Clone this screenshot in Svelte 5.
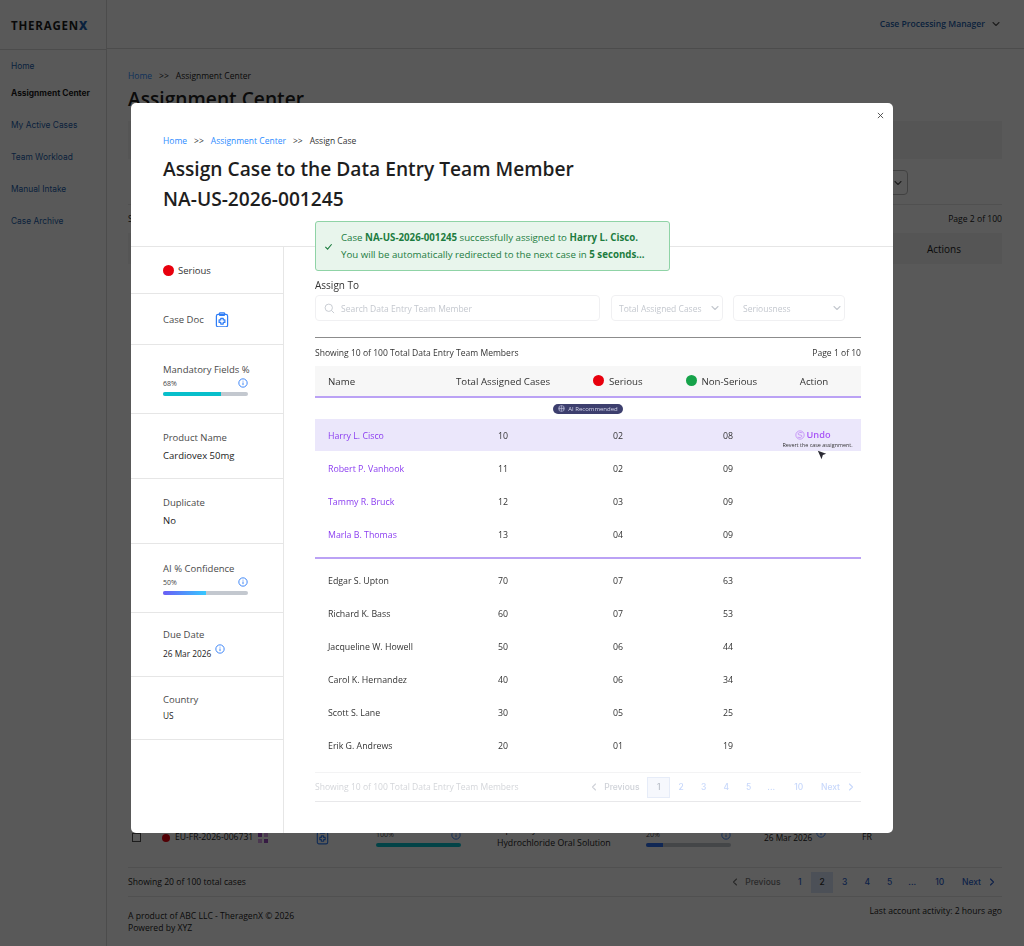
<script>
  const nav = ["Home", "Assignment Center", "My Active Cases", "Team Workload", "Manual Intake", "Case Archive"];

  const recommended = [
    { name: "Harry L. Cisco", total: 10, serious: "02", non: "08", picked: true },
    { name: "Robert P. Vanhook", total: 11, serious: "02", non: "09" },
    { name: "Tammy R. Bruck", total: 12, serious: "03", non: "09" },
    { name: "Marla B. Thomas", total: 13, serious: "04", non: "09" }
  ];

  const others = [
    { name: "Edgar S. Upton", total: 70, serious: "07", non: "63" },
    { name: "Richard K. Bass", total: 60, serious: "07", non: "53" },
    { name: "Jacqueline W. Howell", total: 50, serious: "06", non: "44" },
    { name: "Carol K. Hernandez", total: 40, serious: "06", non: "34" },
    { name: "Scott S. Lane", total: 30, serious: "05", non: "25" },
    { name: "Erik G. Andrews", total: 20, serious: "01", non: "19" }
  ];
</script>

{#snippet info(cls = "")}
  <svg class="info {cls}" viewBox="0 0 12 12" width="10" height="10" fill="none" stroke="#2f7df6" stroke-width="1.1">
    <circle cx="6" cy="6" r="5" />
    <path d="M6 5.4v3.1M6 3.3v.9" />
  </svg>
{/snippet}

{#snippet caseDoc(size, color)}
  <svg viewBox="0 0 16 18" width={size} height={size * 1.125} fill="none" stroke={color} stroke-width="1.4" stroke-linejoin="round">
    <rect x="1.6" y="2.6" width="12.8" height="14.4" rx="2" />
    <rect x="5" y="1" width="6" height="3" rx="1" />
    <path d="M6.6 7.2h2.8v1.9h1.9v2.8H9.4v1.9H6.6v-1.9H4.7V9.1h1.9z" />
  </svg>
{/snippet}

{#snippet chevron(d = "M3 4.5 6 7.5 9 4.5")}
  <svg viewBox="0 0 12 12" width="12" height="12" fill="none" stroke="currentColor" stroke-width="1.1" stroke-linecap="round" stroke-linejoin="round">
    <path {d} />
  </svg>
{/snippet}

{#snippet row(r)}
  <div class="grid row" class:picked={r.picked}>
    <span class="who" class:ai={recommended.includes(r)}>{r.name}</span>
    <span class="mid">{r.total}</span>
    <span class="mid">{r.serious}</span>
    <span class="mid">{r.non}</span>
    {#if r.picked}
      <div class="undo">
        <span class="undo-link">
          <svg viewBox="0 0 12 12" width="10" height="10" fill="none" stroke="#c08cf5" stroke-width="1">
            <circle cx="6" cy="6" r="5" />
            <path d="M8.8 3.6C7 2.4 3.6 3 3.6 4.8c0 2 4.8.4 4.8 2.4 0 1.8-3.4 2.3-5.2 1.2" />
          </svg>
          Undo
        </span>
        <span class="revert">Revert the case assignment.</span>
      </div>
    {/if}
  </div>
{/snippet}

<div class="shell">
  <aside class="side">
    <div class="logo">THERAGEN<b>X</b></div>
    <nav>
      {#each nav as item, i}
        <a class:on={i === 1} href="#/">{item}</a>
      {/each}
    </nav>
  </aside>

  <div class="page">
    <header class="top">
      <span class="role">Case Processing Manager</span>
      <span class="role-chev">{@render chevron()}</span>
    </header>

    <main class="main">
      <div class="crumbs"><a href="#/">Home</a><i>&gt;&gt;</i><span>Assignment Center</span></div>
      <h1>Assignment Center</h1>
      <div class="strip"></div>
      <div class="filters"><span class="select">{@render chevron()}</span></div>
      <div class="count"><span>Showing 20 of 100 total cases</span><span>Page 2 of 100</span></div>
      <div class="thead"><span>Actions</span></div>
      <div class="spacer"></div>
      <div class="lastrow">
        <span class="check"></span>
        <span class="rdot"></span>
        <span class="case-id">EU-FR-2026-006731</span>
        <svg class="apps" viewBox="0 0 10 10" width="10" height="10"><rect width="4" height="4" x="0" y="0" fill="#9b4fc0" /><rect width="4" height="4" x="6" y="0" fill="#d7a0e6" /><rect width="4" height="4" x="0" y="6" fill="#d7a0e6" /><rect width="4" height="4" x="6" y="6" fill="#9b4fc0" /></svg>
        <span class="doc">{@render caseDoc(13, "#2f7df6")}</span>
        <div class="meter m1">
          <div class="meter-top"><small>100%</small>{@render info()}</div>
          <div class="bar"><div class="fill teal" style="width:100%"></div></div>
        </div>
        <div class="drug">Diphenhydramine<br />Hydrochloride Oral Solution</div>
        <div class="meter m2">
          <div class="meter-top"><small>20%</small>{@render info()}</div>
          <div class="bar"><div class="fill blue" style="width:20%"></div></div>
        </div>
        <span class="date">26 Mar 2026 {@render info("up")}</span>
        <span class="fr">FR</span>
      </div>
      <div class="bottom">
        <span>Showing 20 of 100 total cases</span>
        <div class="pager">
          <span class="prev">{@render chevron("M7.5 3 4.5 6 7.5 9")} Previous</span>
          <span class="pg">1</span><span class="pg cur">2</span><span class="pg">3</span><span class="pg">4</span><span class="pg">5</span><span class="pg">...</span><span class="pg wide">10</span>
          <span class="next">Next {@render chevron("M4.5 3 7.5 6 4.5 9")}</span>
        </div>
      </div>
      <footer class="foot">
        <span>A product of ABC LLC - TheragenX © 2026<br />Powered by XYZ</span>
        <span>Last account activity: 2 hours ago</span>
      </footer>
    </main>
  </div>

  <div class="overlay">
    <section class="modal">
      <button class="close" aria-label="Close">
        <svg viewBox="0 0 8 8" width="7" height="7" stroke="#444" stroke-width="1"><path d="M1 1l6 6M7 1l-6 6" /></svg>
      </button>

      <div class="m-head">
        <div class="crumbs m"><a href="#/">Home</a><i>&gt;&gt;</i><a href="#/">Assignment Center</a><i>&gt;&gt;</i><span>Assign Case</span></div>
        <h2>Assign Case to the Data Entry Team Member<br />NA-US-2026-001245</h2>
      </div>

      <div class="toast">
        <svg viewBox="0 0 10 10" width="9" height="9" fill="none" stroke="#1c7c3f" stroke-width="1.2"><path d="M1.5 5.5 4 8 8.5 2.5" /></svg>
        <p>Case <b>NA-US-2026-001245</b> successfully assigned to <b>Harry L. Cisco.</b><br />You will be automatically redirected to the next case in <b>5 seconds...</b></p>
      </div>

      <div class="m-body">
        <div class="facts">
          <div class="fact serious inline"><span class="dot red big"></span><span class="val-l">Serious</span></div>
          <div class="fact docs inline"><span class="lab">Case Doc</span>{@render caseDoc(14, "#2f7df6")}</div>
          <div class="fact tall">
            <span class="lab">Mandatory Fields %</span>
            <div class="meter-top"><small>68%</small>{@render info()}</div>
            <div class="bar"><div class="fill cyan" style="width:68%"></div></div>
          </div>
          <div class="fact mid-cell"><span class="lab">Product Name</span><span class="val">Cardiovex 50mg</span></div>
          <div class="fact mid-cell"><span class="lab">Duplicate</span><span class="val">No</span></div>
          <div class="fact tall">
            <span class="lab">AI % Confidence</span>
            <div class="meter-top"><small>50%</small>{@render info()}</div>
            <div class="bar"><div class="fill grad" style="width:50%"></div></div>
          </div>
          <div class="fact due"><span class="lab">Due Date</span><span class="val sm">26 Mar 2026 {@render info("up")}</span></div>
          <div class="fact country"><span class="lab">Country</span><span class="val sm">US</span></div>
        </div>

        <div class="assign">
          <label class="assign-label" for="member">Assign To</label>
          <div class="tools">
            <div class="search">
              <svg viewBox="0 0 12 12" width="11" height="11" fill="none" stroke="#c4c8cf" stroke-width="1"><circle cx="5.2" cy="5.2" r="4" /><path d="M8.2 8.2 11 11" /></svg>
              <input id="member" placeholder="Search Data Entry Team Member" disabled />
            </div>
            <div class="pick p1">Total Assigned Cases {@render chevron()}</div>
            <div class="pick p2">Seriousness {@render chevron()}</div>
          </div>

          <div class="sum"><span>Showing 10 of 100 Total Data Entry Team Members</span><span>Page 1 of 10</span></div>

          <div class="grid hd">
            <span class="hname">Name</span>
            <span class="mid">Total Assigned Cases</span>
            <span class="mid"><i class="dot red"></i> Serious</span>
            <span class="mid non"><i class="dot green"></i> Non-Serious</span>
            <span class="act">Action</span>
          </div>

          <div class="ai-wrap">
            <span class="ai-pill">
              <svg viewBox="0 0 10 10" width="7" height="7" fill="none" stroke="#c9cbe6" stroke-width=".8"><circle cx="5" cy="5" r="4.2" /><path d="M1 5h8M5 1v8M2.5 2.5v5M7.5 2.5v5" /></svg>
              AI Recommended
            </span>
          </div>

          <div class="group">
            {#each recommended as r}
              {@render row(r)}
            {/each}
          </div>

          <div class="group rest">
            {#each others as r}
              {@render row(r)}
            {/each}
          </div>

          <div class="m-pager">
            <span>Showing 10 of 100 Total Data Entry Team Members</span>
            <div class="pager light">
              <span class="prev">{@render chevron("M7.5 3 4.5 6 7.5 9")} Previous</span>
              <span class="pg cur">1</span><span class="pg">2</span><span class="pg">3</span><span class="pg">4</span><span class="pg">5</span><span class="pg">...</span><span class="pg wide">10</span>
              <span class="next">Next {@render chevron("M4.5 3 7.5 6 4.5 9")}</span>
            </div>
          </div>

          <svg class="cursor" viewBox="0 0 12 12" width="10" height="10"><path d="M1 1l10 3.5-4 1.5-1.5 5z" fill="#2a2a33" /></svg>
        </div>
      </div>
    </section>
  </div>
</div>

<style>
  :global(body) {
    margin: 0;
    background: #fff;
  }

  .shell {
    display: flex;
    height: 946px;
    overflow: hidden;
    font-family: "Open Sans", sans-serif;
    color: #222;
  }

  /* page behind the dialog */
  .side {
    width: 106px;
    flex: none;
    border-right: 1px solid #d9d9d9;
    font-family: Inter, sans-serif;
  }

  .logo {
    height: 48px;
    display: flex;
    align-items: center;
    padding-left: 11px;
    border-bottom: 1px solid #d9d9d9;
    font: 700 11.5px "Open Sans", sans-serif;
    letter-spacing: 0.8px;
    color: #1c1c1c;
    margin-top: 1px;
  }

  .logo b {
    color: #1d5fae;
  }

  nav {
    display: flex;
    flex-direction: column;
    padding: 0 0 0 11px;
  }

  nav a {
    font-size: 8.4px;
    line-height: 12px;
    color: #1d5fae;
    text-decoration: none;
    margin-top: 20px;
  }

  nav a:first-child {
    margin-top: 10px;
  }

  nav a.on {
    font-weight: 700;
    color: #1c1c1c;
    margin-top: 15px;
  }

  .page {
    flex: 1;
    min-width: 0;
    display: flex;
    flex-direction: column;
  }

  .top {
    height: 49px;
    flex: none;
    box-sizing: border-box;
    border-bottom: 1px solid #d9d9d9;
    display: flex;
    align-items: center;
    justify-content: flex-end;
    padding-right: 22px;
    gap: 5px;
  }

  .role {
    font-size: 8.6px;
    font-weight: 600;
    color: #1d5fae;
  }

  .role-chev {
    display: flex;
    color: #555;
  }

  .main {
    flex: 1;
    display: flex;
    flex-direction: column;
    padding: 21px 22px 12px 21px;
    min-height: 0;
  }

  .crumbs {
    font-size: 8.5px;
    line-height: 12px;
    display: flex;
    gap: 7px;
  }

  .crumbs a {
    color: #2d8cff;
    text-decoration: none;
  }

  .crumbs i {
    font-style: normal;
  }

  h1 {
    margin: 5px 0 0;
    font-size: 19.2px;
    line-height: 24px;
    font-weight: 600;
  }

  .strip {
    height: 38px;
    margin-top: 10px;
    background: #f3f3f3;
  }

  .filters {
    display: flex;
    justify-content: flex-end;
    padding: 11px 94px 9px 0;
    border-bottom: 1px solid #e6e6e6;
  }

  .select {
    width: 60px;
    height: 25px;
    box-sizing: border-box;
    border: 1px solid #bbb;
    border-radius: 4px;
    display: flex;
    align-items: center;
    justify-content: flex-end;
    padding-right: 3px;
    color: #555;
  }

  .count {
    display: flex;
    justify-content: space-between;
    font-size: 8.6px;
    line-height: 12px;
    padding: 8px 0 8px;
  }

  .thead {
    height: 31px;
    background: #f3f3f3;
    display: flex;
    align-items: center;
    justify-content: flex-end;
    padding-right: 41px;
    font-size: 10px;
  }

  .spacer {
    flex: 1;
  }

  .lastrow {
    height: 38px;
    flex: none;
    display: flex;
    align-items: flex-start;
    font-size: 8.75px;
    border-bottom: 1px solid #e6e6e6;
  }

  .check {
    width: 9px;
    height: 9px;
    box-sizing: border-box;
    border: 1px solid #555;
    margin: 4px 0 0 4px;
    flex: none;
  }

  .rdot {
    width: 8px;
    height: 8px;
    border-radius: 50%;
    background: #e8000d;
    margin: 5px 0 0 21px;
    flex: none;
  }

  .case-id {
    margin: 2px 0 0 5px;
    line-height: 13px;
    font-size: 8.6px;
    flex: none;
    width: 78px;
    white-space: nowrap;
  }

  .apps {
    margin: 4px 0 0 5px;
    flex: none;
  }

  .doc {
    margin: 1px 0 0 48px;
    flex: none;
  }

  .meter {
    margin-top: -2px;
  }

  .meter.m1 {
    width: 85px;
    margin-left: 47px;
    flex: none;
  }

  .drug {
    width: 149px;
    flex: none;
    margin: -5px 0 0 36px;
    line-height: 13px;
  }

  .meter.m2 {
    width: 85px;
    flex: none;
  }

  .date {
    margin: -1px 0 0 33px;
    width: 98px;
    flex: none;
    line-height: 13px;
    font-size: 8.3px;
    white-space: nowrap;
  }

  .fr {
    margin-top: 2px;
    line-height: 13px;
  }

  .bottom {
    height: 29px;
    flex: none;
    box-sizing: border-box;
    border-bottom: 1px solid #e6e6e6;
    display: flex;
    align-items: center;
    justify-content: space-between;
    font-size: 8.6px;
  }

  .pager {
    display: flex;
    align-items: center;
    font-family: Inter, sans-serif;
    font-size: 8.5px;
    font-weight: 500;
    color: #2a5fd0;
    padding-right: 4px;
  }

  .prev, .next {
    display: flex;
    align-items: center;
    gap: 4px;
  }

  .prev {
    color: #777;
    margin-right: 8px;
  }

  .next {
    margin-left: 6px;
    gap: 5px;
  }

  .pg {
    width: 22.5px;
    height: 21px;
    display: flex;
    align-items: center;
    justify-content: center;
  }

  .pg.wide {
    width: 32.5px;
  }

  .pg.cur {
    background: #dbe6fa;
    color: #333;
  }

  .foot {
    display: flex;
    justify-content: space-between;
    align-items: flex-start;
    padding-top: 8px;
    font-size: 8.6px;
    line-height: 12px;
  }

  .foot span:first-child {
    padding-top: 5px;
  }

  .overlay {
    position: fixed;
    inset: 0;
    background: rgba(0, 0, 0, 0.65);
    display: flex;
    justify-content: center;
    align-items: flex-start;
    padding-top: 103px;
  }

  /* dialog */
  .modal {
    position: relative;
    width: 762px;
    height: 730px;
    background: #fff;
    border-radius: 5px;
    display: flex;
    flex-direction: column;
  }

  .close {
    position: absolute;
    top: 9px;
    right: 9px;
    border: 0;
    background: none;
    padding: 0;
    display: flex;
  }

  .m-head {
    height: 144px;
    box-sizing: border-box;
    padding: 32px 32px 0;
    border-bottom: 1px solid #e6e6e6;
    flex: none;
  }

  .crumbs.m {
    color: #333;
  }

  h2 {
    margin: 7px 0 0;
    font-size: 19.2px;
    line-height: 30px;
    font-weight: 600;
    color: #1e1e1e;
  }

  .toast {
    position: absolute;
    left: 184px;
    top: 118px;
    width: 355px;
    height: 50px;
    box-sizing: border-box;
    background: #e8f5ec;
    border: 1px solid #8fd3a6;
    border-radius: 3px;
    display: flex;
    align-items: center;
    gap: 8px;
    padding-left: 8px;
    color: #1c7c3f;
    font-size: 9.7px;
  }

  .toast p {
    margin: 0;
    line-height: 17px;
  }

  .m-body {
    flex: 1;
    display: flex;
    min-height: 0;
  }

  .facts {
    width: 153px;
    flex: none;
    box-sizing: border-box;
    border-right: 1px solid #e6e6e6;
  }

  .fact {
    box-sizing: border-box;
    border-bottom: 1px solid #e6e6e6;
    padding: 0 35px 0 32px;
    display: flex;
    flex-direction: column;
    justify-content: center;
    font-size: 9.5px;
  }

  .fact.inline {
    flex-direction: row;
    justify-content: flex-start;
    align-items: center;
    gap: 4px;
  }

  .fact.serious { height: 47px; }
  .fact.docs { height: 51px; gap: 11px; padding-top: 1px; }
  .fact.tall { height: 69px; }
  .fact.mid-cell { height: 65px; padding-top: 2px; }
  .fact.due { height: 64px; }
  .fact.country { height: 63px; }

  .lab {
    color: #4a4a4a;
    line-height: 13px;
    white-space: nowrap;
  }

  .val {
    margin-top: 5px;
    line-height: 14px;
    color: #222;
  }

  .val.sm {
    font-size: 8.3px;
    margin-top: 3px;
    white-space: nowrap;
  }

  .val-l {
    color: #333;
  }

  .meter-top {
    display: flex;
    justify-content: space-between;
    align-items: center;
    margin-top: 2px;
    height: 11px;
  }

  small {
    font-size: 7px;
    color: #444;
  }

  .bar {
    height: 4px;
    border-radius: 2px;
    background: #c3c8cf;
    margin-top: 3px;
    overflow: hidden;
  }

  .fill {
    height: 100%;
  }

  .fill.cyan { background: #07bfcb; }
  .fill.grad { background: linear-gradient(90deg, #6a5cf6, #36c8ff); }
  .fill.teal { background: #07bfcb; }
  .fill.blue { background: #2f6ff0; }

  .info {
    flex: none;
  }

  .info.up {
    vertical-align: 3px;
    margin-left: 2px;
  }

  .assign {
    flex: 1;
    padding: 0 32px 0 31px;
    position: relative;
    min-width: 0;
  }

  .assign-label {
    display: block;
    margin-top: 32px;
    font-size: 10px;
    line-height: 13px;
    color: #333;
  }

  .tools {
    display: flex;
    margin-top: 3px;
    height: 26px;
  }

  .search, .pick {
    box-sizing: border-box;
    border: 1px solid #f0f0f2;
    border-radius: 4px;
    display: flex;
    align-items: center;
    font-size: 8.5px;
    color: #c4c8cf;
  }

  .search {
    width: 285px;
    padding-left: 8px;
    gap: 6px;
  }

  .search input {
    border: 0;
    background: none;
    padding: 0;
    flex: 1;
    font: inherit;
  }

  .search input::placeholder {
    color: #c4c8cf;
  }

  .pick {
    margin-left: 11px;
    justify-content: space-between;
    padding: 0 1px 0 7px;
  }

  .pick.p1 { width: 112px; }
  .pick.p2 { width: 112px; margin-left: 10px; padding-left: 9px; }

  .sum {
    display: flex;
    justify-content: space-between;
    margin-top: 16px;
    padding-top: 9px;
    border-top: 1px solid #8c8c8c;
    font-size: 8.55px;
    line-height: 12px;
    color: #333;
  }

  .grid {
    display: grid;
    grid-template-columns: 115px 120px 110px 110px 78px;
    padding-left: 13px;
    align-items: center;
  }

  .mid {
    text-align: center;
  }

  .hd {
    margin-top: 7px;
    height: 32px;
    box-sizing: border-box;
    background: #f7f7f7;
    border-bottom: 2px solid #bba2f5;
    font-size: 9.7px;
    color: #333;
  }

  .hd .non {
    padding-right: 13px;
    white-space: nowrap;
  }

  .act {
    padding-right: 16px;
    text-align: center;
  }

  .dot {
    display: inline-block;
    width: 11px;
    height: 11px;
    border-radius: 50%;
    vertical-align: -1.5px;
    margin-right: 2px;
  }

  .dot.red { background: #e8000d; }
  .dot.green { background: #16a34a; }
  .dot.big { margin: 0; }

  .ai-wrap {
    height: 21px;
    display: flex;
    justify-content: center;
    align-items: center;
  }

  .ai-pill {
    background: #3d3f6e;
    color: #d4d5ea;
    font-size: 6px;
    height: 10px;
    border-radius: 5px;
    padding: 0 5px;
    display: flex;
    align-items: center;
    gap: 3px;
  }

  .group {
    padding-bottom: 6px;
  }

  .row {
    height: 33px;
    font-size: 8.8px;
    color: #333;
  }

  .row.picked {
    height: 32px;
    margin-bottom: 1px;
    padding-top: 1px;
    box-sizing: border-box;
    background: #ebe7fb;
  }

  .who.ai {
    color: #8b3df0;
  }

  .undo {
    display: flex;
    flex-direction: column;
    align-items: center;
    padding-right: 9px;
    white-space: nowrap;
    margin-top: 7px;
  }

  .undo-link {
    color: #a855f7;
    font-size: 9.2px;
    font-weight: 600;
    display: flex;
    align-items: center;
    gap: 2px;
    line-height: 12px;
    margin-right: 10px;
  }

  .revert {
    font-size: 5.4px;
    line-height: 9px;
    color: #333;
  }

  .rest {
    border-top: 2px solid #bba2f5;
    padding: 5px 0 10px;
  }

  .m-pager {
    border-top: 1px solid #f3f3f4;
    border-bottom: 1px solid #e8e8ea;
    height: 30px;
    box-sizing: border-box;
    display: flex;
    align-items: center;
    justify-content: space-between;
    font-size: 8.55px;
    color: #d4d6da;
  }

  .pager.light {
    color: #c8d8fb;
  }

  .pager.light .prev {
    color: #cfd2d8;
  }

  .pager.light .pg.cur {
    background: #f6f8fd;
    border: 1px solid #e6ecf8;
    color: #b9bec8;
    box-sizing: border-box;
  }

  .cursor {
    position: absolute;
    left: 533px;
    top: 203px;
  }
</style>
